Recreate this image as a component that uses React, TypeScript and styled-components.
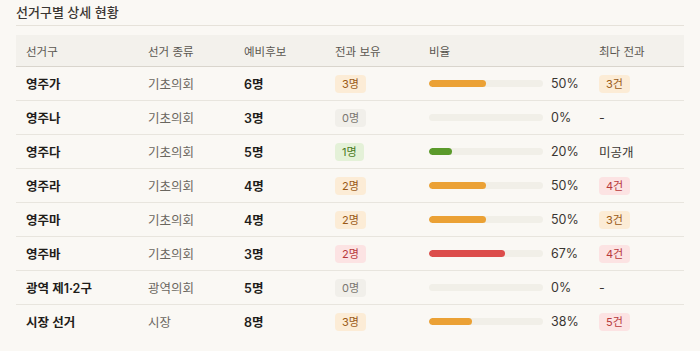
import React from "react";
import styled, { createGlobalStyle } from "styled-components";

const Global = createGlobalStyle`
  html, body { margin: 0; padding: 0; background: #faf8f4; }
  body { font-family: "Inter", "Noto Sans CJK KR", sans-serif; color: #2a2a2a; }
`;

const Page = styled.div`
  padding: 0 16px;
  width: 668px;
`;

const Title = styled.h2`
  margin: 0;
  font-size: 13px;
  font-weight: 500;
  color: #3a3632;
  line-height: 24px;
  padding-bottom: 1px;
  border-bottom: 1px solid #e6e2da;
`;

const Table = styled.div`
  margin-top: 9px;
  display: flex;
  flex-direction: column;
`;

const cols = "122px 96px 91px 94px 170px 1fr";

const HeadRow = styled.div`
  display: grid;
  grid-template-columns: ${cols};
  height: 31px;
  align-items: center;
  background: #f3f1ec;
  border-bottom: 1px solid #d9d5cd;
  font-size: 11.5px;
  color: #5a5650;
`;

const Row = styled.div<{ $last?: boolean }>`
  display: grid;
  grid-template-columns: ${cols};
  height: 33px;
  align-items: center;
  border-bottom: 1px solid ${(p) => (p.$last ? "transparent" : "#e8e5de")};
  font-size: 12.5px;
`;

const Cell = styled.div<{ $weight?: number; $color?: string }>`
  padding-left: 10px;
  font-weight: ${(p) => p.$weight ?? 400};
  color: ${(p) => p.$color ?? "#2a2a2a"};
  white-space: nowrap;
`;

type Tone = "orange" | "grey" | "green" | "red";
const tones: Record<Tone, { bg: string; fg: string; bar: string }> = {
  orange: { bg: "#fcecd6", fg: "#9a5a18", bar: "#eba135" },
  grey: { bg: "#f1efea", fg: "#7a7670", bar: "#e0ddd6" },
  green: { bg: "#e4f1d8", fg: "#4a7a22", bar: "#5b9a2b" },
  red: { bg: "#fce3e3", fg: "#b8393b", bar: "#dc4d4b" },
};

const Badge = styled.span<{ $tone: Tone }>`
  display: inline-block;
  height: 18px;
  line-height: 18px;
  padding: 0 7px;
  border-radius: 4px;
  font-size: 11px;
  background: ${(p) => tones[p.$tone].bg};
  color: ${(p) => tones[p.$tone].fg};
`;

const BarWrap = styled.div`
  display: flex;
  align-items: center;
  gap: 8px;
  padding-left: 10px;
`;

const Track = styled.div`
  width: 114px;
  height: 7px;
  border-radius: 4px;
  background: #f1efe8;
  overflow: hidden;
`;

const Fill = styled.div<{ $tone: Tone }>`
  height: 100%;
  border-radius: 4px;
  background: ${(p) => tones[p.$tone].bar};
`;

const Pct = styled.span`
  font-size: 12.5px;
  color: #3a3632;
`;

type R = {
  name: string;
  kind: string;
  cand: number;
  has: number;
  tone: Tone;
  pct: number;
  max: string | null;
  maxTone?: Tone;
};

const rows: R[] = [
  { name: "영주가", kind: "기초의회", cand: 6, has: 3, tone: "orange", pct: 50, max: "3건", maxTone: "orange" },
  { name: "영주나", kind: "기초의회", cand: 3, has: 0, tone: "grey", pct: 0, max: "-" },
  { name: "영주다", kind: "기초의회", cand: 5, has: 1, tone: "green", pct: 20, max: "미공개" },
  { name: "영주라", kind: "기초의회", cand: 4, has: 2, tone: "orange", pct: 50, max: "4건", maxTone: "red" },
  { name: "영주마", kind: "기초의회", cand: 4, has: 2, tone: "orange", pct: 50, max: "3건", maxTone: "orange" },
  { name: "영주바", kind: "기초의회", cand: 3, has: 2, tone: "red", pct: 67, max: "4건", maxTone: "red" },
  { name: "광역 제1·2구", kind: "광역의회", cand: 5, has: 0, tone: "grey", pct: 0, max: "-" },
  { name: "시장 선거", kind: "시장", cand: 8, has: 3, tone: "orange", pct: 38, max: "5건", maxTone: "red" },
];

export default function App() {
  return (
    <>
      <Global />
      <Page>
        <Title>선거구별 상세 현황</Title>
        <Table>
          <HeadRow>
            <Cell $color="#5a5650">선거구</Cell>
            <Cell $color="#5a5650">선거 종류</Cell>
            <Cell $color="#5a5650">예비후보</Cell>
            <Cell $color="#5a5650">전과 보유</Cell>
            <Cell $color="#5a5650">비율</Cell>
            <Cell $color="#5a5650">최다 전과</Cell>
          </HeadRow>
          {rows.map((r, i) => (
            <Row key={r.name} $last={i === rows.length - 1}>
              <Cell $weight={600} $color="#1f1d1a">{r.name}</Cell>
              <Cell $color="#6a665f">{r.kind}</Cell>
              <Cell $weight={600} $color="#1f1d1a">{r.cand}명</Cell>
              <Cell>
                <Badge $tone={r.tone}>{r.has}명</Badge>
              </Cell>
              <BarWrap>
                <Track>
                  <Fill $tone={r.tone} style={{ width: `${r.pct}%` }} />
                </Track>
                <Pct>{r.pct}%</Pct>
              </BarWrap>
              <Cell $color="#3a3632">
                {r.maxTone ? <Badge $tone={r.maxTone}>{r.max}</Badge> : r.max}
              </Cell>
            </Row>
          ))}
        </Table>
      </Page>
    </>
  );
}
